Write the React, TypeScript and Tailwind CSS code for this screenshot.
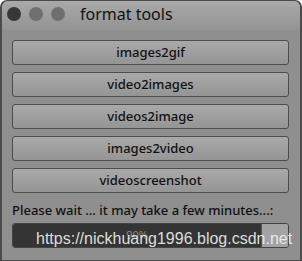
import React from "react";

const tools = ["images2gif", "video2images", "videos2image", "images2video", "videoscreenshot"];

export default function App() {
  return (
    <div
      className="relative w-[302px] h-[261px] bg-[#4b4b4b] pt-0 px-[2px] pb-[2px] rounded-t-[7px] overflow-hidden"
      style={{ fontFamily: '"Noto Sans", "Open Sans", sans-serif' }}
    >
      <div className="h-full flex flex-col bg-[#8f8f8f] rounded-t-[6px] mt-[1px]">
        {/* title bar */}
        <div className="h-[29px] flex items-start pt-[6px] pl-[5px] gap-[9px] rounded-t-[6px] bg-gradient-to-b from-[#a9a9a9] to-[#939393]">
          <span className="w-[14px] h-[14px] rounded-full bg-[#373737]" />
          <span className="w-[14px] h-[14px] rounded-full bg-[#6f6f6f] -ml-[1px]" />
          <span className="w-[14px] h-[14px] rounded-full bg-[#6f6f6f] -ml-[1px]" />
          <span className="ml-[6px] text-[16px] leading-[16px] text-[#111] -mt-[1px]">format tools</span>
        </div>

        {/* buttons */}
        <div className="flex flex-col gap-[7px] pl-[10px] pr-[11px] pt-[10px]">
          {tools.map((t) => (
            <button
              key={t}
              className="h-[25px] rounded-[3px] border border-[#4d4d4d] bg-gradient-to-b from-[#a9a9a9] to-[#959595] text-[13px] font-medium text-[#111] leading-none"
            >
              {t}
            </button>
          ))}
        </div>

        <div className="pl-[10px] mt-[8px] text-[13px] font-medium text-[#111] leading-[18px]">
          Please wait ... it may take a few minutes...:
        </div>

        {/* progress */}
        <div className="ml-[10px] mr-[11px] mt-[4px] h-[25px] flex rounded-[3px] border border-[#444] overflow-hidden">
          <div className="flex-1 bg-[#343434] flex items-start justify-center pt-[5px] text-[11px] leading-none text-[#8a8a8a]">
            90%
          </div>
          <div className="w-[27px] bg-[#a3a3a3] border-l border-[#555]" />
        </div>
      </div>

      {/* watermark */}
      <span
        className="absolute left-[36px] top-[231px] text-[16px] leading-none text-[#f2f2f2]/90"
        style={{ fontFamily: '"Liberation Sans", Arial, sans-serif' }}
      >
        https://nickhuang1996.blog.csdn.net
      </span>
    </div>
  );
}
